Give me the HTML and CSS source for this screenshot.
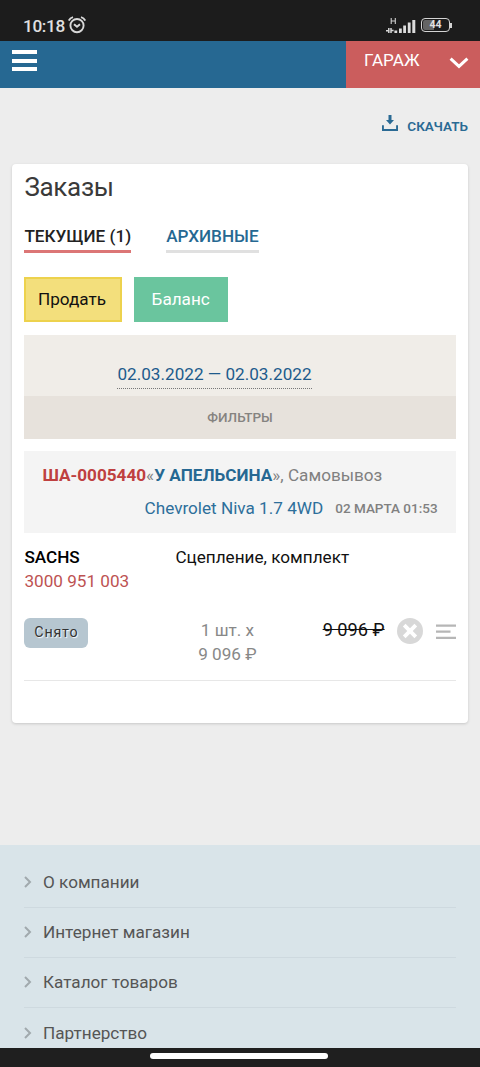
FILE: index.html
```html
<!DOCTYPE html>
<html lang="ru">
<head>
<meta charset="utf-8">
<title>Заказы</title>
<link rel="stylesheet" href="styles.css">
</head>
<body>
<div class="screen">
  <div class="status">
    <span class="time">10:18</span>
    <svg class="alarm" width="18" height="18" viewBox="0 0 18 18" fill="none" stroke="#d8d8d8" stroke-width="1.9"><circle cx="9" cy="9.6" r="6.6"/><path d="M6 8.2l3 2.6 3-2.6M.8 4.6Q2 2 5 1.2M17.2 4.6Q16 2 13 1.2"/></svg>
    <svg class="signal" width="30" height="17" viewBox="0 0 30 17">
      <path d="M5.2 1v6M9.3 1v6M5.2 4h4.1" stroke="#d0d0d0" stroke-width="1.1" fill="none"/>
      <path d="M0 13.8h2.7M2.8 11v5M5 11v5M5 13.4h2.6" stroke="#d8d8d8" stroke-width="1.5" fill="none"/>
      <path d="M8.4 13.5h2.8V16H8.4zM13 11.5h2.8V16H13zM17.2 8.5H20V16h-2.8zM21.8 5.5h2.8V16h-2.8zM26.3 3h3v13h-3z" fill="#dcdcdc"/>
    </svg>
    <span class="battery"><span class="battery-body">44</span><span class="battery-tip"></span></span>
  </div>

  <header class="topbar">
    <button class="burger" aria-label="Меню"><i></i><i></i><i></i></button>
    <div class="garage">
      <span>ГАРАЖ</span>
      <svg width="20" height="12" viewBox="0 0 20 12" fill="none" stroke="#fff" stroke-width="3"><path d="M1.6 1.6L10 9.4l8.4-7.8"/></svg>
    </div>
  </header>

  <main class="content">
    <a class="download">
      <svg width="16" height="17" viewBox="0 0 16 17"><path d="M0 10.2h1.9v3.7h12.2v-3.7H16v5.9H0z" fill="#2a6a94"/><path d="M6.5 0h3v5h2.5L8 9.6 4 5h2.5z" fill="#2a6a94"/></svg>
      <span>СКАЧАТЬ</span>
    </a>

    <section class="card">
      <h1 class="title">Заказы</h1>
      <nav class="tabs">
        <a class="tab tab-active">ТЕКУЩИЕ (1)</a>
        <a class="tab">АРХИВНЫЕ</a>
      </nav>
      <div class="actions">
        <button class="btn btn-sell">Продать</button>
        <button class="btn btn-balance">Баланс</button>
      </div>
      <div class="period"><a class="dates">02.03.2022 — 02.03.2022</a></div>
      <div class="filters">ФИЛЬТРЫ</div>
      <div class="order">
        <div class="order-row"><b class="order-no">ША-0005440</b>«<b class="seller">У АПЕЛЬСИНА</b>», Самовывоз</div>
        <div class="order-row order-meta"><a class="car">Chevrolet Niva 1.7 4WD</a><span class="date">02 МАРТА 01:53</span></div>
      </div>
      <div class="item">
        <div class="part"><div class="brand">SACHS</div><div class="sku">3000 951 003</div></div>
        <div class="part-name">Сцепление, комплект</div>
      </div>
      <div class="item-state">
        <span class="badge">Снято</span>
        <div class="qty">1 шт. x<br>9 096 ₽</div>
        <div class="sum">9 096 ₽</div>
        <svg class="cancel" width="26" height="26" viewBox="0 0 26 26"><circle cx="13" cy="13" r="13" fill="#d8d8d8"/><path d="M7.2 7.2l11.6 11.6M18.8 7.2L7.2 18.8" stroke="#fff" stroke-width="3.8"/></svg>
        <svg class="more" width="20" height="16" viewBox="0 0 20 16" fill="none" stroke="#b6b6b6" stroke-width="2.2"><path d="M0 1.6h20M0 7.7h14.5M0 13.9h20"/></svg>
      </div>
    </section>
  </main>

  <footer class="links">
    <a class="link"><svg width="8" height="12" viewBox="0 0 8 12"><path d="M1 1l5 5-5 5"/></svg>О компании</a>
    <a class="link"><svg width="8" height="12" viewBox="0 0 8 12"><path d="M1 1l5 5-5 5"/></svg>Интернет магазин</a>
    <a class="link"><svg width="8" height="12" viewBox="0 0 8 12"><path d="M1 1l5 5-5 5"/></svg>Каталог товаров</a>
    <a class="link"><svg width="8" height="12" viewBox="0 0 8 12"><path d="M1 1l5 5-5 5"/></svg>Партнерство</a>
  </footer>
  <div class="gesture"><i></i></div>
</div>
</body>
</html>
```
FILE: styles.css
```css
* { box-sizing: border-box; }
body { margin: 0; font: 17.15px/24px Roboto, sans-serif; color: #111; background: #ededed; }
button { font: inherit; border: 0; padding: 0; margin: 0; }
.screen { width: 480px; height: 1067px; display: flex; flex-direction: column; overflow: hidden; }

.status { flex: none; height: 41px; padding: 10px 28px 0 23px; display: flex; align-items: center; background: #1c1c1c; color: #e0e0e0; }
.time { font-weight: 500; font-size: 17.2px; letter-spacing: -.35px; width: 45px; white-space: nowrap; }
.alarm { margin-top: -2px; }
.signal { margin: -1px 5px 0 auto; }
.battery { display: flex; align-items: center; margin-top: -1px; }
.battery-body { width: 29px; height: 14px; border: 1.5px solid #d4d4d4; border-radius: 4px; background: linear-gradient(90deg, #646464 45%, #1c1c1c 45%); background-clip: padding-box; box-shadow: inset 0 0 0 1px #1c1c1c; font-size: 10.5px; line-height: 12px; font-weight: 700; text-align: center; }
.battery-tip { width: 2px; height: 5px; background: #d4d4d4; }

.topbar { flex: none; height: 47px; display: flex; justify-content: space-between; background: #266892; }
.burger { width: 25px; height: 21px; margin: 9px 0 0 12px; background: none; display: flex; flex-direction: column; justify-content: space-between; }
.burger i { width: 25px; height: 4px; background: #fff; }
.garage { width: 134px; padding: 7px 11px 0 18px; display: flex; justify-content: space-between; align-items: flex-start; background: #cb5d5d; color: #fff; }
.garage svg { margin-top: 9px; }

.content { flex: none; height: 757px; padding: 0 12px; }
.download { height: 76px; display: flex; justify-content: flex-end; gap: 9px; color: #2a6a94; font-size: 13.5px; font-weight: 600; }
.download svg { margin-top: 27px; }
.download span { margin-top: 26px; }

.card { height: 559px; padding: 0 12.4px; background: #fff; border-radius: 4px; box-shadow: 0 1px 3px rgba(0,0,0,.16); }
.title { margin: 0; padding-top: 7px; height: 60px; font-size: 26px; line-height: 32px; font-weight: 400; color: #3a3a3a; letter-spacing: -.3px; }
.tabs { height: 53px; display: flex; gap: 35px; align-items: flex-start; }
.tab { height: 29px; border-bottom: 3.5px solid #e0e0e0; color: #266892; font-weight: 500; }
.tab-active { border-color: #dc7676; color: #222; }
.actions { display: flex; gap: 12px; height: 45px; }
.btn { width: 94px; color: #fff; background: #6ac59e; padding-bottom: 2px; }
.btn-sell { width: 97.3px; padding: 0 2px 2px 0; color: #111; background: #f3df7c; border: 2px solid #edd24d; }
.period { margin-top: 13px; height: 61px; padding-top: 27px; text-align: center; background: #f0ede8; }
.dates { display: inline-block; height: 27px; margin-right: 51px; color: #205b8c; border-bottom: 1px dotted #777; }
.filters { height: 43px; line-height: 42px; text-align: center; font-size: 13.5px; font-weight: 500; color: #858380; background: #e7e2dc; }
.order { margin-top: 12px; height: 82px; padding: 8px 18px; background: #f4f4f4; color: #808080; white-space: nowrap; }
.order-row { height: 33px; line-height: 33px; }
.order-meta { display: flex; justify-content: flex-end; gap: 12px; }
.order-no { font-weight: 700; color: #bf4040; }
.seller { font-weight: 700; color: #266892; }
.car { color: #2d6f9b; }
.date { font-size: 13.5px; font-weight: 500; }
.item { display: flex; margin-top: 12px; height: 73px; }
.part { width: 151px; }
.brand { font-weight: 500; color: #000; }
.sku { color: #bd5252; }
.item-state { display: flex; align-items: flex-start; height: 63px; border-bottom: 1.5px solid #e7e7e7; }
.badge { width: 64px; height: 29.5px; border-radius: 6px; background: #b6c6d0; font-size: 14.3px; line-height: 29px; text-align: center; letter-spacing: .8px; color: #333; text-shadow: 1px 1px 1px #fff; }
.qty { width: 118px; margin-left: 80px; text-align: center; color: #888; }
.sum { margin-left: auto; font-size: 18.2px; text-decoration: line-through; white-space: nowrap; }
.cancel { margin-left: 12px; }
.more { margin: 6px 0 0 13px; }

.links { flex: none; height: 203px; padding: 12.5px 24px 0; background: #d9e4e9; overflow: hidden; }
.link { height: 50.2px; display: flex; align-items: center; gap: 11px; border-bottom: 1.5px solid #ced9df; color: #555; }
.link svg { fill: none; stroke: #a1a9ad; stroke-width: 2; }
.gesture { flex: none; height: 19px; background: #1f1f1f; display: flex; justify-content: center; padding: 5px 3px 0 0; }
.gesture i { width: 178px; height: 6px; border-radius: 3px; background: #fff; }
```
